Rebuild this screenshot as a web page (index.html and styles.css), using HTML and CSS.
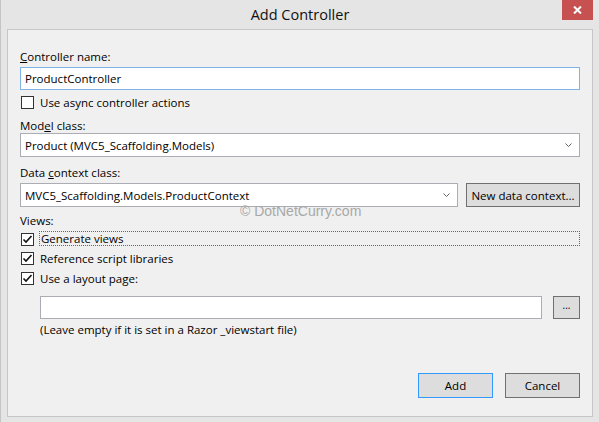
FILE: index.html
```html
<!DOCTYPE html>
<html>
<head>
<meta charset="utf-8">
<link rel="stylesheet" href="styles.css">
</head>
<body>
<div class="window">
  <div class="titlebar">
    <span class="spacer"></span>
    <span class="title">Add Controller</span>
    <span class="close"><svg width="9" height="8" viewBox="0 0 9 8"><path d="M1 0.5 L8 7.5 M8 0.5 L1 7.5" stroke="#fff" stroke-width="2"/></svg></span>
  </div>
  <div class="client">
    <div class="label l-ctrl"><u>C</u>ontroller name:</div>
    <div class="field focus f-ctrl">ProductController</div>
    <div class="check c-async"><span class="box"></span><span class="ctext">Use async controller actions</span></div>

    <div class="label l-model">Mod<u>e</u>l class:</div>
    <div class="field select f-model"><span>Product (MVC5_Scaffolding.Models)</span><svg class="chev" width="7" height="4" viewBox="0 0 7 4"><path d="M0.5 0.5 L3.5 3.5 L6.5 0.5" fill="none" stroke="#606060" stroke-width="1"/></svg></div>

    <div class="label l-data">Data <u>c</u>ontext class:</div>
    <div class="row r-data">
      <div class="field select f-data"><span>MVC5_Scaffolding.Models.ProductContext</span><svg class="chev" width="7" height="4" viewBox="0 0 7 4"><path d="M0.5 0.5 L3.5 3.5 L6.5 0.5" fill="none" stroke="#606060" stroke-width="1"/></svg></div>
      <div class="btn b-new">New data context...</div>
    </div>

    <div class="label l-views">Views:</div>
    <div class="check c-gen"><span class="box"><svg width="11" height="11" viewBox="0 0 11 11"><path d="M1.5 5.5 L4 8 L9.5 2" fill="none" stroke="#111" stroke-width="1.6"/></svg></span><span class="ctext dotted">Generate views</span></div>
    <div class="check c-ref"><span class="box"><svg width="11" height="11" viewBox="0 0 11 11"><path d="M1.5 5.5 L4 8 L9.5 2" fill="none" stroke="#111" stroke-width="1.6"/></svg></span><span class="ctext">Reference script libraries</span></div>
    <div class="check c-lay"><span class="box"><svg width="11" height="11" viewBox="0 0 11 11"><path d="M1.5 5.5 L4 8 L9.5 2" fill="none" stroke="#111" stroke-width="1.6"/></svg></span><span class="ctext">Use a layout page:</span></div>

    <div class="row r-layout">
      <div class="field f-layout"></div>
      <div class="btn b-dots">...</div>
    </div>
    <div class="note">(Leave empty if it is set in a Razor _viewstart file)</div>

    <div class="row r-actions">
      <div class="btn b-add">Add</div>
      <div class="btn b-cancel">Cancel</div>
    </div>

    <div class="watermark">© DotNetCurry.com</div>
  </div>
</div>
</body>
</html>
```

FILE: styles.css
```css
* { box-sizing: border-box; }
html, body { margin: 0; padding: 0; }
body {
  width: 599px;
  height: 422px;
  overflow: hidden;
  font-family: "Open Sans", "Noto Sans", sans-serif;
  font-size: 11.5px;
  color: #000;
}
u { text-decoration: underline; text-underline-offset: 1px; }
.window {
  width: 599px;
  height: 422px;
  background: #e5e5e5;
  border-left: 1px solid #c4c4c4;
  display: flex;
  flex-direction: column;
}
.titlebar {
  height: 29px;
  display: grid;
  grid-template-columns: 1fr auto 1fr;
  align-items: start;
}
.title {
  margin-top: 5px;
  font-size: 14.5px;
  line-height: 20px;
  color: #111;
}
.close {
  justify-self: end;
  margin-right: 6px;
  width: 31px;
  height: 20px;
  background: #c75050;
  display: flex;
  align-items: center;
  justify-content: center;
}
.client {
  position: relative;
  margin: 0 6px 0 6px;
  height: 388px;
  border: 1px solid #c6c6c6;
  background: #f0f0f0;
  padding: 0 12px 0 12px;
  display: flex;
  flex-direction: column;
}
.label { line-height: 15px; height: 15px; }
.l-ctrl { margin-top: 19px; }
.field {
  height: 23px;
  background: #fff;
  border: 1px solid #abadb3;
  line-height: 21px;
  padding: 0 4px;
  display: flex;
  align-items: center;
  white-space: nowrap;
}
.field.focus { border-color: #80b3e6; }
.f-ctrl { margin-top: 3px; }
.select { justify-content: space-between; padding-right: 7px; }
.chev { flex: none; }
.check {
  display: flex;
  align-items: flex-start;
  height: 15px;
}
.box {
  width: 13px;
  height: 13px;
  margin-top: 1px;
  border: 1px solid #333;
  background: #fff;
  margin-left: 1px;
  display: flex;
  align-items: center;
  justify-content: center;
  flex: none;
}
.ctext { margin-left: 6px; line-height: 15px; }
.c-async { margin-top: 5px; }
.l-model { margin-top: 8px; }
.f-model { margin-top: 0; height: 24px; }
.l-data { margin-top: 8px; }
.row { display: flex; }
.r-data { margin-top: 3px; gap: 8px; }
.f-data { flex: 1; height: 24px; }
.btn {
  background: #dddddd;
  border: 1px solid #707070;
  display: flex;
  align-items: center;
  justify-content: center;
  white-space: nowrap;
}
.b-new { width: 114px; height: 24px; }
.l-views { margin-top: 6px; }
.watermark {
  position: absolute;
  left: 232px;
  top: 173px;
  font-family: "Liberation Sans", Arial, sans-serif;
  font-size: 14px;
  line-height: 16px;
  color: #a8a8a8;
  white-space: nowrap;
}
.c-gen { margin-top: 3px; }
.c-gen .box { margin-top: 2px; }
.ctext.dotted {
  flex: 1;
  margin-left: 5px;
  padding-left: 1px;
  border: 1px dotted #666;
  height: 15px;
  line-height: 13px;
}
.c-ref { margin-top: 5px; }
.c-lay { margin-top: 5px; }
.r-layout { margin-top: 10px; padding-left: 20px; gap: 11px; }
.f-layout { flex: 1; }
.b-dots { width: 27px; height: 23px; font-size: 10px; align-items: flex-end; padding-bottom: 6px; }
.note { margin-left: 20px; margin-top: 3px; line-height: 15px; }
.r-actions { margin-top: 36px; justify-content: flex-end; gap: 12px; }
.b-add, .b-cancel { width: 75px; height: 25px; }
.b-add { border-color: #3399ff; }
```
